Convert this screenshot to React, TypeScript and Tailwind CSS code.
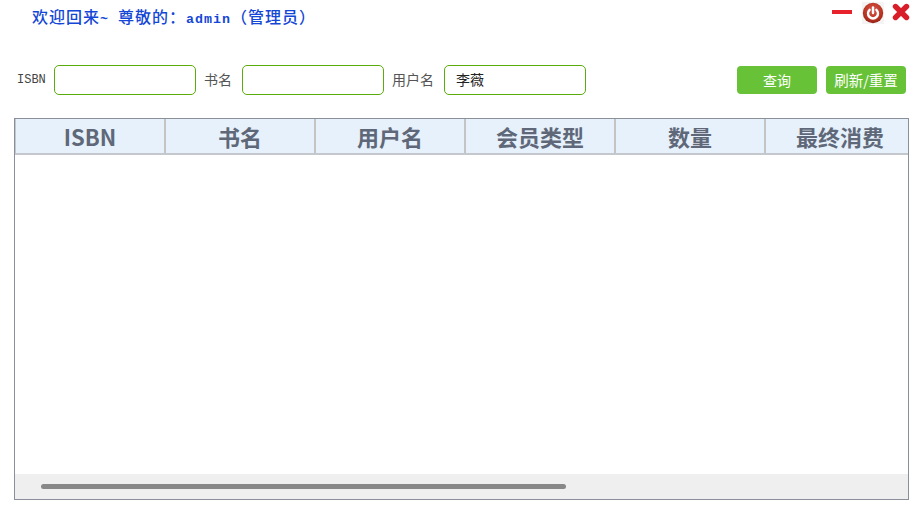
const columns = ["ISBN", "书名", "用户名", "会员类型", "数量", "最终消费"];

const labelFont = "font-['Noto_Sans_CJK_SC','Noto_Sans',sans-serif]";

function PowerIcon() {
    return (
        <svg width="22" height="22" viewBox="0 0 22 22">
            <defs>
                <radialGradient id="powerFill" cx="50%" cy="35%" r="70%">
                    <stop offset="0%" stopColor="#d9584a" />
                    <stop offset="70%" stopColor="#b5301f" />
                    <stop offset="100%" stopColor="#8a2015" />
                </radialGradient>
            </defs>
            <rect width="22" height="22" fill="#f4f4f4" />
            <circle cx="11" cy="11" r="10.2" fill="url(#powerFill)" />
            <path d="M7.6 7.8a5 5 0 1 0 6.8 0" fill="none" stroke="#fff" strokeWidth="2.4" strokeLinecap="round" />
            <path d="M11 5.5v5.5" fill="none" stroke="#fff" strokeWidth="2.4" strokeLinecap="round" />
        </svg>
    );
}

function CloseIcon() {
    return (
        <svg width="18" height="18" viewBox="0 0 18 18">
            <path d="M3.5 3.5l11 11M14.5 3.5l-11 11" fill="none" stroke="#d81e28" strokeWidth="5.4" strokeLinecap="round" />
        </svg>
    );
}

function Field({ label, value, mono }: { label: string; value?: string; mono?: boolean }) {
    return (
        <div className="flex items-center">
            <span
                className={
                    mono
                        ? "w-[28px] text-[12px] text-[#444] font-['Liberation_Mono',monospace]"
                        : `w-auto pb-[2px] -ml-[1px] pr-[1px] text-[14px] text-[#555] ${labelFont}`
                }
            >
                {label}
            </span>
            <div
                className={`ml-[9px] flex h-[30px] w-[142px] items-center rounded-[5px] border border-[#5bab0c] bg-white pb-[2px] pl-[11px] text-[14px] text-[#222] ${labelFont}`}
            >
                {value}
            </div>
        </div>
    );
}

export default function App() {
    return (
        <div className="h-[511px] w-[916px] overflow-hidden bg-white">
            <div className="flex h-[65px] items-start justify-between">
                <h1 className="ml-[32px] mt-[9px] text-[16px] leading-[20px] font-medium tracking-[1px] text-[#1447d6] font-['Liberation_Mono','Noto_Sans_CJK_SC',monospace]">
                    欢迎回来<span className="text-[13.3px] font-bold">~ </span>尊敬的：<span className="text-[13.3px] font-bold">admin</span>（管理员）
                </h1>
                <div className="mr-[6px] mt-[2px] flex items-start">
                    <div className="mt-[8px] h-[4px] w-[20px] bg-[#e8222c]" />
                    <div className="ml-[10px]">
                        <PowerIcon />
                    </div>
                    <div className="ml-[8px] mt-[1px]">
                        <CloseIcon />
                    </div>
                </div>
            </div>

            <div className="flex h-[30px] items-center pl-[17px] pr-[10px]">
                <Field label="ISBN" mono />
                <div className="ml-[9px]">
                    <Field label="书名" />
                </div>
                <div className="ml-[9px]">
                    <Field label="用户名" value="李薇" />
                </div>
                <div className="ml-auto flex gap-[9px]">
                    <button className={`h-[28px] w-[80px] rounded-[4px] bg-[#67c237] text-[14px] text-white ${labelFont}`}>查询</button>
                    <button className={`h-[28px] w-[80px] rounded-[4px] bg-[#67c237] text-[14.5px] text-white ${labelFont}`}>刷新/重置</button>
                </div>
            </div>

            <div className="ml-[14px] mt-[23px] flex h-[382px] w-[895px] flex-col overflow-hidden border border-[#8a9099]">
                <div className="flex h-[36px] shrink-0 border-b-2 border-l border-[#c4c8cc] bg-[#e6f1fc]">
                    {columns.map((col) => (
                        <div
                            key={col}
                            className={`flex w-[150px] shrink-0 items-center justify-center border-r-2 border-[#c4c4c4] text-[22px] font-bold text-[#5f6878] ${labelFont}`}
                        >
                            {col}
                        </div>
                    ))}
                </div>
                <div className="flex-1" />
                <div className="flex h-[25px] shrink-0 items-center bg-[#efefef] pl-[26px]">
                    <div className="h-[5px] w-[525px] rounded-full bg-[#888888]" />
                </div>
            </div>
        </div>
    );
}
